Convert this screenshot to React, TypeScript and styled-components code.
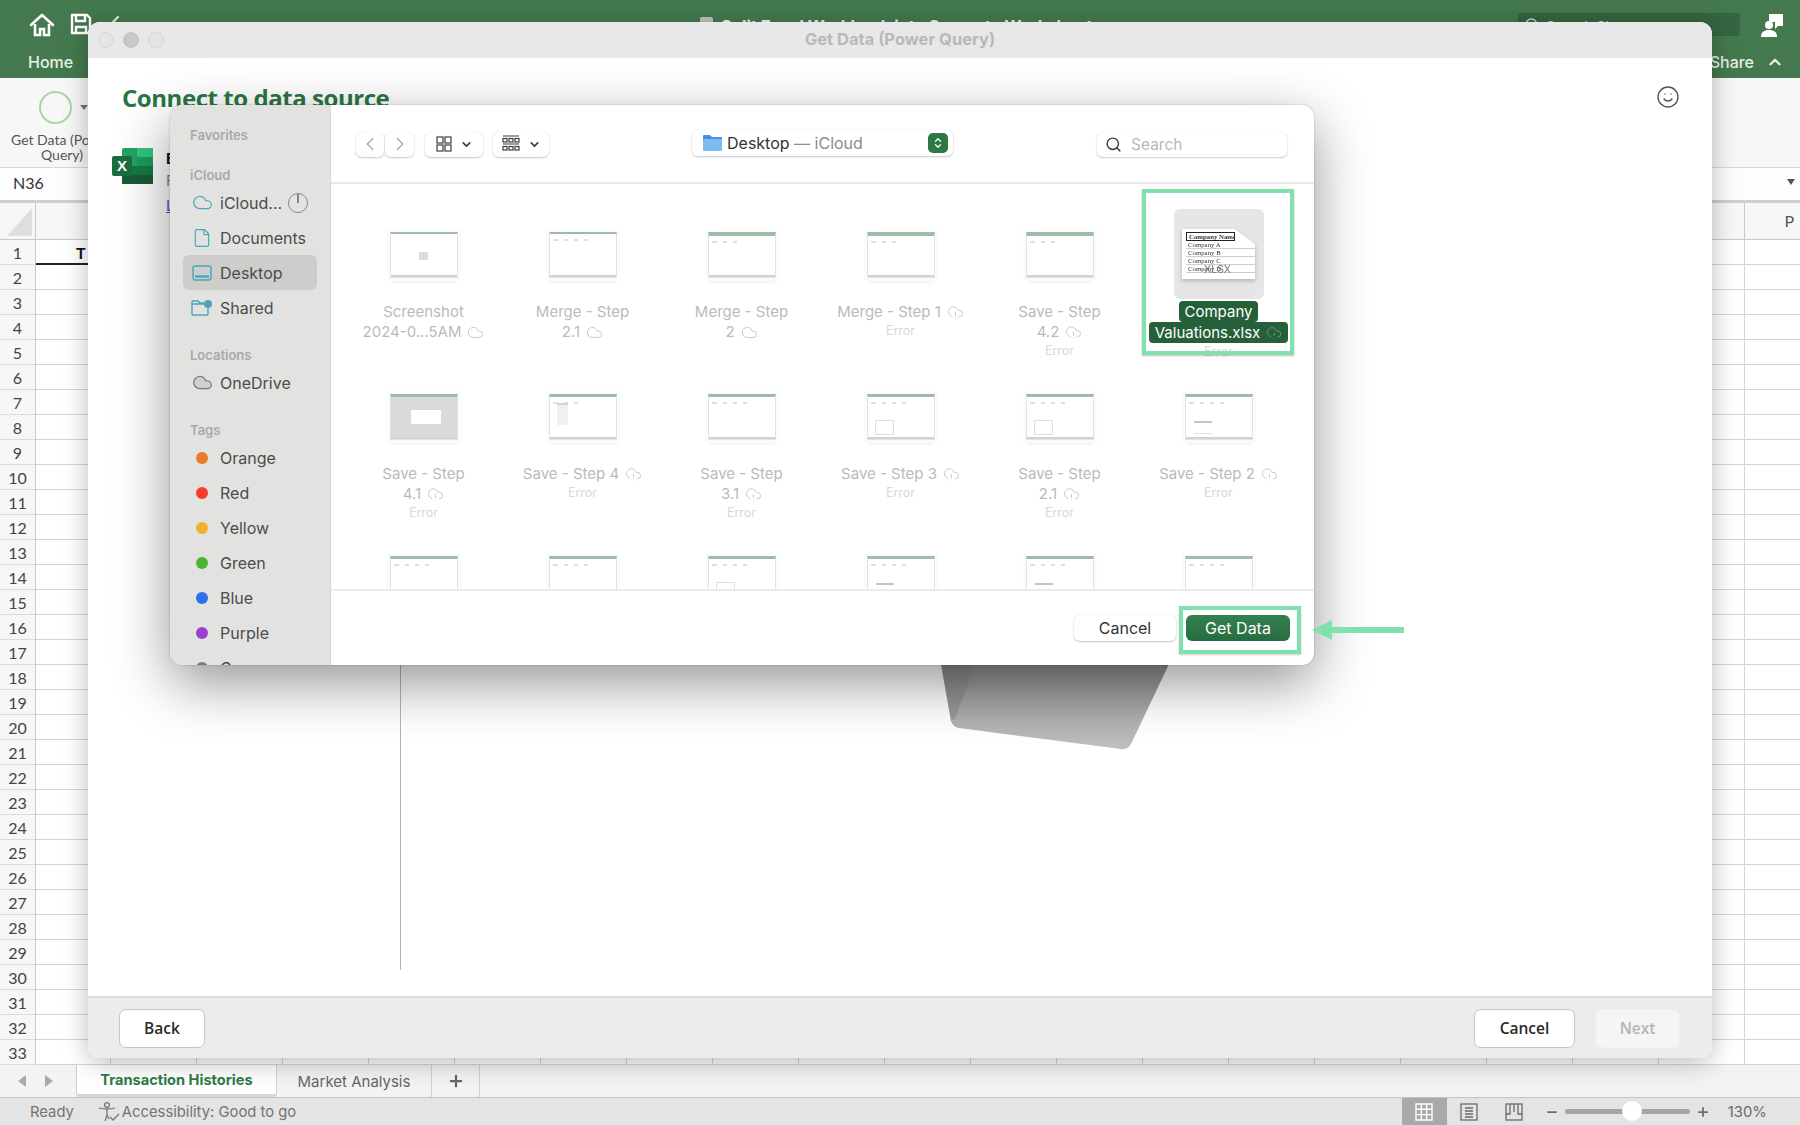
import styled, { createGlobalStyle } from "styled-components";
import {
  ChevronDown,
  ChevronLeft,
  ChevronRight,
  ChevronUp,
  Cloud,
  CloudAlert,
  File,
  Minus,
  Plus,
  Search,
  Smile,
} from "lucide-react";

const GlobalStyle = createGlobalStyle`
  html, body {
    margin: 0;
    padding: 0;
    background: #fff;
  }
  * {
    box-sizing: border-box;
  }
`;

const Screen = styled.div`
  position: relative;
  width: 1800px;
  height: 1125px;
  overflow: hidden;
  display: flex;
  flex-direction: column;
  font-family: "Inter", "Liberation Sans", sans-serif;
`;

/* Excel behind everything */
const TitleBar = styled.div`
  height: 78px;
  flex: none;
  background: #44794f;
  color: #fff;
  display: flex;
  flex-direction: column;
`;

const TitleRow = styled.div`
  height: 46px;
  display: flex;
  align-items: flex-start;
  padding: 13px 0 0 29px;
`;

const QuickIcons = styled.div`
  display: flex;
  gap: 15px;
  width: 140px;
  svg {
    display: block;
  }
`;

const DocTitle = styled.div`
  width: 1349px;
  display: flex;
  align-items: center;
  gap: 8px;
  padding: 3px 0 0 531px;
  font-size: 16.4px;
  font-weight: 700;
  line-height: 20px;
  white-space: nowrap;
  color: #eef3ef;
`;

const DocGlyph = styled.div`
  width: 13px;
  height: 18px;
  flex: none;
  background: #b9c8bc;
  border-radius: 2px;
`;

const SheetSearch = styled.div`
  width: 222px;
  height: 23px;
  display: flex;
  align-items: flex-start;
  gap: 6px;
  padding: 4px 0 0 6px;
  border-radius: 3px;
  background: #356540;
  color: #c7d6ca;
  font-size: 14px;
  line-height: 19px;
  svg {
    flex: none;
  }
`;

const Account = styled.div`
  margin-left: 20px;
  svg {
    display: block;
  }
`;

const TabRow = styled.div`
  flex: 1;
  display: flex;
  align-items: center;
  justify-content: space-between;
  padding: 0 16px 0 28px;
  font-size: 16px;
  font-weight: 500;
  color: #e6efe8;
`;

const ShareGroup = styled.div`
  display: flex;
  align-items: center;
  gap: 12px;
`;

const Ribbon = styled.div`
  height: 89px;
  flex: none;
  background: #f7f7f7;
  padding-top: 12px;
`;

const RibbonAction = styled.div`
  width: 124px;
  display: flex;
  flex-direction: column;
  align-items: center;
  font-family: "Lato", "Open Sans", sans-serif;
  font-size: 14px;
  line-height: 15px;
  color: #555;
  text-align: center;
`;

const ActionIcon = styled.div`
  display: flex;
  align-items: center;
  height: 34px;
  margin: 0 0 8px 3px;
`;

const ActionRing = styled.div`
  width: 33px;
  height: 33px;
  border-radius: 50%;
  border: 2.5px solid #a9d6a6;
`;

const Caret = styled.div`
  width: 0;
  height: 0;
  border-left: 4px solid transparent;
  border-right: 4px solid transparent;
  border-top: 5px solid #777;
  margin-left: 8px;
`;

const FormulaBar = styled.div`
  height: 36px;
  flex: none;
  display: flex;
  align-items: center;
  justify-content: space-between;
  background: #fdfdfd;
  border-top: 1px solid #d8d8d8;
  border-bottom: 3px solid #cfcfcf;
  padding: 0 5px 4px 0;
  font-family: "Lato", "Open Sans", sans-serif;
  font-size: 16px;
  color: #333;
`;

const NameBox = styled.div`
  padding-left: 13px;
`;

const FormulaCaret = styled(Caret)`
  border-top: 6px solid #555;
`;

const ColumnHeaders = styled.div`
  height: 37px;
  flex: none;
  display: flex;
  justify-content: space-between;
  background: #f7f7f7;
  border-bottom: 1px solid #c9c9c9;
  font-family: "Lato", "Open Sans", sans-serif;
  color: #555;
`;

const SelectAll = styled.div`
  width: 36px;
  padding: 5px 3px 3px 7px;
  border-right: 1px solid #c9c9c9;
`;

const Triangle = styled.div`
  width: 100%;
  height: 100%;
  background: #dedede;
  clip-path: polygon(100% 0, 100% 100%, 0 100%);
`;

const LastColumn = styled.div`
  width: 56px;
  border-left: 1px solid #c9c9c9;
  text-align: right;
  padding: 8px 6px 0 0;
  font-size: 16px;
`;

const Sheet = styled.div`
  height: 825px;
  flex: none;
  display: flex;
  background-color: #fff;
  background-image: linear-gradient(#d4d4d4 1px, transparent 1px),
    linear-gradient(90deg, #d4d4d4 1px, transparent 1px);
  background-size: 100% 25px, 86px 100%;
  background-position: 0 -1px, 24px 0;
`;

const RowHeaders = styled.div`
  width: 36px;
  flex: none;
  background: #f7f7f7;
  border-right: 1px solid #c9c9c9;
`;

const RowNumber = styled.div`
  height: 25px;
  display: flex;
  align-items: center;
  justify-content: center;
  border-bottom: 1px solid #dcdcdc;
  font-family: "Lato", "Open Sans", sans-serif;
  font-size: 16px;
  color: #444;
`;

const HeaderCell = styled.div`
  width: 122px;
  height: 25px;
  padding-left: 40px;
  border-bottom: 2px solid #222;
  background: #fff;
  font-family: "Lato", "Open Sans", sans-serif;
  font-size: 16px;
  line-height: 25px;
  font-weight: 700;
  color: #111;
`;

const TabStrip = styled.div`
  height: 32px;
  flex: none;
  display: flex;
  background: #f3f3f3;
  font-size: 15px;
  color: #666;
`;

const TabArrows = styled.div`
  width: 76px;
  display: flex;
  align-items: center;
  gap: 19px;
  padding-left: 18px;
`;

const ArrowTip = styled.div<{ $right?: boolean }>`
  width: 0;
  height: 0;
  border-top: 6px solid transparent;
  border-bottom: 6px solid transparent;
  ${(p) =>
    p.$right
      ? "border-left: 8px solid #aaa;"
      : "border-right: 8px solid #aaa;"}
`;

const SheetTab = styled.div<{ $active?: boolean; $width: number }>`
  width: ${(p) => p.$width}px;
  display: flex;
  align-items: center;
  justify-content: center;
  border-right: 1px solid #d0d0d0;
  ${(p) =>
    p.$active
      ? `
    background: #fff;
    color: #2e7b49;
    font-size: 14.6px;
    font-weight: 700;
    border-bottom: 3px solid #d6d6d6;
    border-left: 1px solid #d0d0d0;
    border-radius: 0 0 4px 4px;
  `
      : ""}
`;

const StatusBar = styled.div`
  height: 28px;
  flex: none;
  display: flex;
  align-items: stretch;
  background: #e4e4e4;
  border-top: 1px solid #c4c4c4;
  font-size: 14.8px;
  color: #737373;
`;

const StatusText = styled.div`
  display: flex;
  align-items: center;
  gap: 2px;
  padding-left: 30px;
`;

const Accessibility = styled(StatusText)`
  padding-left: 24px;
  width: 1328px;
`;

const ViewButton = styled.div<{ $active?: boolean }>`
  width: 45px;
  display: flex;
  align-items: center;
  justify-content: center;
  background: ${(p) => (p.$active ? "#a9a9a9" : "transparent")};
`;

const ZoomGroup = styled.div`
  display: flex;
  align-items: center;
  margin-left: 8px;
  color: #6a6a6a;
`;

const ZoomTrack = styled.div`
  position: relative;
  width: 125px;
  height: 5px;
  margin: 0 6px;
  border-radius: 3px;
  background: #a5a5a5;
`;

const ZoomThumb = styled.div`
  position: absolute;
  left: 57px;
  top: -8px;
  width: 20px;
  height: 20px;
  border-radius: 50%;
  background: #fff;
`;

const ZoomValue = styled.div`
  margin-left: 18px;
`;

/* Get Data window */
const Modal = styled.div`
  position: absolute;
  left: 88px;
  top: 22px;
  width: 1624px;
  height: 1036px;
  display: flex;
  flex-direction: column;
  background: #fff;
  border-radius: 12px;
  overflow: hidden;
`;

const ModalShadow = styled.div`
  position: absolute;
  left: 88px;
  top: 22px;
  width: 1624px;
  height: 1036px;
  border-radius: 12px;
  box-shadow: 0 4px 26px rgba(0, 0, 0, 0.28);
`;

const ModalTitle = styled.div`
  position: relative;
  height: 36px;
  flex: none;
  background: #e8e8e8;
  display: flex;
  align-items: center;
  justify-content: center;
  padding-bottom: 2px;
  font-size: 16.5px;
  font-weight: 700;
  color: #b8b8b8;
`;

const Lights = styled.div`
  position: absolute;
  left: 10px;
  top: 10px;
  display: flex;
  gap: 9px;
`;

const Light = styled.div<{ $dark?: boolean }>`
  width: 16px;
  height: 16px;
  border-radius: 50%;
  background: ${(p) => (p.$dark ? "#c8c8c8" : "#e4e4e4")};
  border: 1px solid ${(p) => (p.$dark ? "#c2c2c2" : "#d6d6d6")};
`;

const ModalBody = styled.div`
  flex: 1;
  display: flex;
  flex-direction: column;
  padding: 21px 0 26px 34px;
`;

const ModalHeading = styled.div`
  display: flex;
  justify-content: space-between;
  align-items: center;
  padding-right: 32px;
  height: 36px;
  margin-bottom: 25px;
  color: #555;
`;

const HeadingText = styled.div`
  font-family: "Open Sans", "Liberation Sans", sans-serif;
  font-size: 24px;
  font-weight: 700;
  letter-spacing: -0.45px;
  color: #2a7645;
`;

const Panes = styled.div`
  flex: 1;
  display: flex;
`;

const SourceList = styled.div`
  width: 289px;
  flex: none;
  border-right: 1px solid #b5b5b5;
  display: flex;
  gap: 12px;
  padding: 8px 0 0 0;
  margin-left: -10px;
  margin-right: 10px;
`;

const SourceText = styled.div`
  font-size: 15px;
  line-height: 22px;
  color: #888;
`;

const SourceName = styled.div`
  font-weight: 700;
  color: #111;
`;

const SourceLink = styled.div`
  margin-top: 3px;
  color: #2c62b4;
  text-decoration: underline;
`;

const PreviewPane = styled.div`
  flex: 1;
  padding: 524px 0 0 530px;
`;

const ModalFooter = styled.div`
  height: 62px;
  flex: none;
  display: flex;
  align-items: center;
  background: #ececec;
  border-top: 2px solid #dcdcdc;
  padding: 0 32px 0 31px;
  font-family: "Open Sans", "Liberation Sans", sans-serif;
  font-size: 15.5px;
  font-weight: 600;
`;

const FooterButton = styled.div<{ $width: number; $disabled?: boolean }>`
  width: ${(p) => p.$width}px;
  height: 39px;
  display: flex;
  align-items: center;
  justify-content: center;
  background: ${(p) => (p.$disabled ? "#f5f5f5" : "#fff")};
  border: 1px solid ${(p) => (p.$disabled ? "#f0f0f0" : "#c6c6c6")};
  border-radius: 7px;
  color: ${(p) => (p.$disabled ? "#b4b4b4" : "#2a2a2a")};
`;

const FooterSpacer = styled.div<{ $width?: number }>`
  ${(p) => (p.$width ? `width: ${p.$width}px;` : "flex: 1;")}
`;

/* macOS file picker */
const Dialog = styled.div`
  position: absolute;
  left: 170px;
  top: 105px;
  width: 1144px;
  height: 560px;
  display: flex;
  background: #fff;
  border-radius: 12px;
  box-shadow: 0 18px 55px rgba(0, 0, 0, 0.42), 0 0 2px rgba(0, 0, 0, 0.25);
`;

const Sidebar = styled.div`
  width: 161px;
  flex: none;
  overflow: hidden;
  padding-top: 20px;
  background: #e2e2e0;
  border-right: 1px solid #d6d6d4;
  border-radius: 12px 0 0 12px;
  font-size: 16px;
  color: #4c4c4c;
`;

const SidebarTitle = styled.div`
  height: 20px;
  margin: 20px 0 0 20px;
  font-size: 13px;
  font-weight: 600;
  line-height: 20px;
  color: #a9a9a9;
  &:first-child {
    margin-top: 0;
  }
`;

const SidebarRow = styled.div<{ $active?: boolean }>`
  height: 35px;
  margin: 0 13px;
  padding-left: 7px;
  display: flex;
  align-items: center;
  gap: 6px;
  border-radius: 6px;
  background: ${(p) => (p.$active ? "#cdcdcb" : "transparent")};
`;

const RowIcon = styled.div`
  width: 24px;
  flex: none;
  display: flex;
  align-items: center;
  justify-content: center;
  color: #4ba5bb;
  svg {
    display: block;
  }
`;

const TagDot = styled.div<{ $color: string }>`
  width: 12px;
  height: 12px;
  border-radius: 50%;
  background: ${(p) => p.$color};
`;

const ProgressRing = styled.div`
  position: relative;
  width: 20px;
  height: 20px;
  border-radius: 50%;
  border: 1.5px solid #888;
  &::after {
    content: "";
    position: absolute;
    left: 8px;
    top: 0;
    width: 1.5px;
    height: 9px;
    background: #888;
  }
`;

const Browser = styled.div`
  flex: 1;
  min-width: 0;
  display: flex;
  flex-direction: column;
`;

const Toolbar = styled.div`
  height: 79px;
  flex: none;
  display: flex;
  align-items: center;
  padding: 1px 0 0 25px;
  border-bottom: 2px solid #e9e9e9;
`;

const ToolButton = styled.div<{ $width: number; $left?: number; $faint?: boolean }>`
  width: ${(p) => p.$width}px;
  height: 25px;
  margin-left: ${(p) => p.$left ?? 0}px;
  display: flex;
  align-items: center;
  justify-content: center;
  gap: 8px;
  background: #fff;
  border-radius: 6px;
  color: ${(p) => (p.$faint ? "#a8a8a8" : "#3c3c3c")};
  box-shadow: 0 1px 2px rgba(0, 0, 0, 0.2), 0 0 1px rgba(0, 0, 0, 0.12);
  svg {
    display: block;
  }
`;

const PathPicker = styled.div`
  width: 261px;
  height: 26px;
  margin: -3px 0 0 143px;
  display: flex;
  align-items: center;
  padding: 0 5px 0 11px;
  background: #fff;
  border-radius: 6px;
  box-shadow: 0 1px 2px rgba(0, 0, 0, 0.22), 0 0 1px rgba(0, 0, 0, 0.12);
  font-size: 16px;
  color: #333;
  svg {
    display: block;
    flex: none;
  }
`;

const PathName = styled.div`
  margin-left: 5px;
  flex: 1;
`;

const PathDim = styled.span`
  color: #8c8c8c;
`;

const Stepper = styled.div`
  width: 20px;
  height: 20px;
  border-radius: 5px;
  background: #2c7947;
  color: #fff;
  display: flex;
  flex-direction: column;
  align-items: center;
  justify-content: center;
  svg {
    margin: -2px 0;
  }
`;

const SearchField = styled.div`
  width: 190px;
  height: 25px;
  margin-left: 144px;
  display: flex;
  align-items: center;
  gap: 9px;
  padding-left: 8px;
  background: #fff;
  border-radius: 6px;
  box-shadow: 0 1px 2px rgba(0, 0, 0, 0.2), 0 0 1px rgba(0, 0, 0, 0.1);
  font-size: 15.5px;
  color: #b9b9b9;
  svg {
    color: #3a3a3a;
    display: block;
  }
`;

const FileGrid = styled.div`
  flex: 1;
  min-height: 0;
  overflow: hidden;
  display: grid;
  grid-template-columns: repeat(6, 159px);
  grid-auto-rows: 162px;
  padding: 26px 0 0 13px;
`;

const FileCell = styled.div`
  position: relative;
  display: flex;
  flex-direction: column;
  align-items: center;
  font-size: 15px;
  line-height: 20px;
  color: #bababa;
`;

const Preview = styled.div<{ $selected?: boolean }>`
  width: 90px;
  height: 90px;
  flex: none;
  margin: ${(p) => (p.$selected ? "-1px 0 2px" : "0 0 2px")};
  display: flex;
  align-items: center;
  justify-content: center;
  border-radius: 6px;
  background: ${(p) => (p.$selected ? "#e6e6e6" : "transparent")};
`;

const Thumb = styled.div<{ $bar: number; $dark?: boolean }>`
  width: 68px;
  height: 46px;
  position: relative;
  display: flex;
  flex-direction: column;
  background: ${(p) => (p.$dark ? "#dadada" : "#fff")};
  border: 1px solid #e2e2e2;
  border-top: ${(p) => p.$bar}px solid #9dbca7;
  box-shadow: 0 0 0 3px #fbfbfb, 0 5px 3px -1px rgba(0, 0, 0, 0.08);
`;

const ThumbMarks = styled.div`
  display: flex;
  gap: 6px;
  padding: 5px 0 0 3px;
`;

const ThumbMark = styled.div<{ $w: number }>`
  width: ${(p) => p.$w}px;
  height: 2px;
  background: #dfdfdf;
`;

type BoxKind = "outline" | "green" | "small" | "menu" | "center" | "white";

const boxPlace: Record<BoxKind, string> = {
  outline: "left: 7px; top: 23px; width: 19px; height: 15px; background: #fff; border: 1px solid #dedede;",
  green: "left: 8px; top: 24px; width: 18px; height: 13px; background: #fff; border-top: 2px solid #b6cdbc; border-bottom: 1px solid #e0e0e0;",
  small: "left: 9px; top: 32px; width: 9px; height: 5px; background: #e6e6e6;",
  menu: "left: 7px; top: 6px; width: 11px; height: 22px; background: #f0f0f0; border-top: 2px solid #c9d4ee;",
  center: "left: 28px; top: 18px; width: 9px; height: 8px; background: #dcdcdc;",
  white: "left: 20px; top: 13px; width: 30px; height: 14px; background: #fff;",
};

const ThumbBox = styled.div<{ $kind: BoxKind }>`
  position: absolute;
  ${(p) => boxPlace[p.$kind]}
`;

const ThumbFoot = styled.div`
  position: absolute;
  left: 0;
  right: 0;
  bottom: 0;
  height: 2px;
  background: #ccd5ce;
`;

const FileName = styled.div`
  display: flex;
  align-items: center;
  gap: 6px;
  height: 20px;
  white-space: nowrap;
  svg {
    color: #c4c4c4;
    display: block;
    flex: none;
  }
`;

const ErrorNote = styled.div`
  font-size: 12.5px;
  line-height: 18px;
  color: #d8d8d8;
`;

const SelectedName = styled.div`
  display: flex;
  align-items: center;
  gap: 6px;
  height: 21px;
  padding: 0 6px;
  background: #25603a;
  border-radius: 4px;
  color: #fff;
  white-space: nowrap;
  svg {
    color: #6f9a7d;
    display: block;
  }
`;

const SelectionFrame = styled.div`
  position: absolute;
  left: 3px;
  top: -21px;
  width: 152px;
  height: 166px;
  border: 4px solid #80e0ae;
  box-shadow: 0 1px 2px rgba(0, 0, 0, 0.25);
`;

const DocShadow = styled.div`
  filter: drop-shadow(0 2px 2px rgba(0, 0, 0, 0.22));
`;

const DocPage = styled.div`
  position: relative;
  width: 73px;
  height: 50px;
  background: #fff;
  clip-path: polygon(0 0, 72% 0, 100% 30%, 100% 100%, 0 100%);
  padding: 3px 0 0 4px;
  font-family: "Liberation Serif", serif;
  font-size: 6.8px;
  line-height: 7px;
  color: #333;
`;

const DocRow = styled.div<{ $head?: boolean }>`
  width: ${(p) => (p.$head ? 49 : 69)}px;
  height: ${(p) => (p.$head ? 9 : 8)}px;
  border: ${(p) => (p.$head ? "1px solid #222" : "0")};
  border-bottom: 1px solid ${(p) => (p.$head ? "#222" : "#ccc")};
  font-weight: ${(p) => (p.$head ? 700 : 400)};
  padding-left: 2px;
  white-space: nowrap;
  overflow: hidden;
`;

const DocBadge = styled.div`
  position: absolute;
  right: 24px;
  bottom: 4px;
  font-family: "Inter", sans-serif;
  font-size: 10.5px;
  line-height: 11px;
  color: #777;
`;

const DialogFooter = styled.div`
  height: 76px;
  flex: none;
  display: flex;
  align-items: center;
  justify-content: flex-end;
  gap: 10px;
  padding: 0 24px 0 0;
  border-top: 2px solid #ececec;
  font-size: 16px;
`;

const CancelButton = styled.div`
  width: 102px;
  height: 26px;
  display: flex;
  align-items: center;
  justify-content: center;
  border-radius: 6px;
  background: #fff;
  color: #333;
  box-shadow: 0 1px 2px rgba(0, 0, 0, 0.22), 0 0 1px rgba(0, 0, 0, 0.14);
`;

const PrimaryButton = styled.div`
  position: relative;
  width: 104px;
  height: 26px;
  display: flex;
  align-items: center;
  justify-content: center;
  border-radius: 6px;
  background: linear-gradient(#347f4f, #276d40);
  color: #fff;
  &::after {
    content: "";
    position: absolute;
    inset: -9px -11px -13px -7px;
    border: 4px solid #80e0ae;
    box-shadow: 0 1px 2px rgba(0, 0, 0, 0.2);
  }
`;

const Pointer = styled.svg`
  position: absolute;
  left: 126px;
  top: 4px;
`;

const sources = [
  { title: "Documents", icon: "doc" },
  { title: "Desktop", icon: "desktop", active: true },
  { title: "Shared", icon: "shared" },
];

const tags = [
  ["Orange", "#ec7a2b"],
  ["Red", "#fb3a2e"],
  ["Yellow", "#edb230"],
  ["Green", "#4bb636"],
  ["Blue", "#2b70ee"],
  ["Purple", "#9a3fcf"],
  ["Gray", "#7a7a7a"],
];

type FileItem = {
  lines: string[];
  cloud?: boolean;
  alert?: boolean;
  error?: boolean;
  bar: number;
  marks?: number;
  dark?: boolean;
  box?: BoxKind;
};

const files: FileItem[] = [
  { lines: ["Screenshot", "2024-0...5AM"], cloud: true, bar: 2, box: "center" },
  { lines: ["Merge - Step", "2.1"], cloud: true, bar: 2, marks: 4 },
  { lines: ["Merge - Step", "2"], cloud: true, bar: 4, marks: 3 },
  { lines: ["Merge - Step 1"], alert: true, error: true, bar: 4, marks: 3 },
  { lines: ["Save - Step", "4.2"], alert: true, error: true, bar: 4, marks: 3 },
];

const secondRow: FileItem[] = [
  { lines: ["Save - Step", "4.1"], alert: true, error: true, bar: 3, dark: true, box: "white" },
  { lines: ["Save - Step 4"], alert: true, error: true, bar: 3, marks: 3, box: "menu" },
  { lines: ["Save - Step", "3.1"], alert: true, error: true, bar: 3, marks: 4 },
  { lines: ["Save - Step 3"], alert: true, error: true, bar: 3, marks: 4, box: "outline" },
  { lines: ["Save - Step", "2.1"], alert: true, error: true, bar: 3, marks: 4, box: "outline" },
  { lines: ["Save - Step 2"], alert: true, error: true, bar: 3, marks: 4, box: "green" },
];

const thirdRowBoxes: (BoxKind | undefined)[] = ["small", undefined, "outline", "green", "green", "small"];

const thirdRow: FileItem[] = thirdRowBoxes.map((box) => ({
  lines: [],
  bar: 3,
  marks: 4,
  box,
}));

const HomeIcon = () => (
  <svg width="26" height="24" viewBox="0 0 26 24" fill="none" stroke="#fff" strokeWidth="2.6">
    <path d="M2 12 13 2l11 10" strokeLinecap="round" strokeLinejoin="round" />
    <path d="M6 11v11h5v-6h4v6h5V11" fill="none" />
  </svg>
);

const SaveIcon = () => (
  <svg width="22" height="22" viewBox="0 0 22 22" fill="none" stroke="#fff" strokeWidth="2.4">
    <path d="M2 2h15l3 3v15H2z" strokeLinejoin="round" />
    <path d="M6 2v6h9V2M6 20v-6h10v6" />
  </svg>
);

const UndoIcon = () => (
  <svg width="22" height="22" viewBox="0 0 22 22" fill="none" stroke="#e3ebe4" strokeWidth="2.2">
    <path d="M4 11 11 4M4 11c5-2 12-1 14 8" strokeLinecap="round" />
  </svg>
);

const AccountIcon = () => (
  <svg width="24" height="26" viewBox="0 0 24 26" fill="#fff">
    <circle cx="9" cy="12" r="4" />
    <path d="M1 24c0-5 3-7 8-7s8 2 8 7z" />
    <path d="M9 1h14v12h-5l-3 3V9H9z" />
  </svg>
);

const ExcelLogo = () => (
  <svg width="42" height="36" viewBox="0 0 42 36">
    <rect x="10" y="0" width="31" height="36" rx="2" fill="#21a366" />
    <rect x="25" y="0" width="16" height="9" fill="#33c481" />
    <rect x="10" y="9" width="15" height="9" fill="#21a366" />
    <rect x="25" y="9" width="16" height="9" fill="#1d9a5c" />
    <rect x="10" y="18" width="31" height="9" fill="#107c41" />
    <rect x="10" y="27" width="31" height="9" fill="#185c37" />
    <rect x="0" y="8" width="20" height="20" rx="2" fill="#1c6d3f" />
    <text x="10" y="23" textAnchor="middle" fontFamily="Liberation Sans" fontWeight="700" fontSize="15" fill="#fff">
      X
    </text>
  </svg>
);

const DesktopIcon = () => (
  <svg width="20" height="16" viewBox="0 0 20 16" fill="none" stroke="#4ba5bb" strokeWidth="1.4">
    <rect x="1" y="1" width="18" height="14" rx="2" />
    <path d="M3 11.5h14" strokeWidth="2.4" />
  </svg>
);

const SharedIcon = () => (
  <svg width="22" height="18" viewBox="0 0 22 18" fill="none" stroke="#4ba5bb" strokeWidth="1.4">
    <path d="M1 5V3a1 1 0 0 1 1-1h5l2 2h4M1 5h14M1 5v10a1 1 0 0 0 1 1h14a1 1 0 0 0 1-1V9" />
    <circle cx="17" cy="5" r="4" fill="#4ba5bb" stroke="none" />
  </svg>
);

const GroupIcon = () => (
  <svg width="18" height="18" viewBox="0 0 18 18" fill="none" stroke="#3c3c3c" strokeWidth="1.2">
    <path d="M1 1h16M1 9h16" />
    <rect x="1" y="3.5" width="4" height="3.5" />
    <rect x="7" y="3.5" width="4" height="3.5" />
    <rect x="13" y="3.5" width="4" height="3.5" />
    <rect x="1" y="11.5" width="4" height="3.5" />
    <rect x="7" y="11.5" width="4" height="3.5" />
    <rect x="13" y="11.5" width="4" height="3.5" />
  </svg>
);

const TilesIcon = () => (
  <svg width="16" height="16" viewBox="0 0 16 16" fill="none" stroke="#3c3c3c" strokeWidth="1.2">
    <rect x="1" y="1" width="6" height="6" />
    <rect x="9" y="1" width="6" height="6" />
    <rect x="1" y="9" width="6" height="6" />
    <rect x="9" y="9" width="6" height="6" />
  </svg>
);

const FolderIcon = () => (
  <svg width="19" height="19" viewBox="0 0 19 19">
    <path d="M0 3a1 1 0 0 1 1-1h6l2 2h9a1 1 0 0 1 1 1v2H0z" fill="#4a90dc" />
    <rect x="0" y="6" width="19" height="12" rx="1" fill="#7dbcee" />
  </svg>
);

const AccessIcon = () => (
  <svg width="22" height="22" viewBox="0 0 22 22" fill="none" stroke="#777" strokeWidth="1.3">
    <circle cx="9" cy="4" r="2.4" />
    <path d="M1 7c3 1 5 1 8 1s5 0 8-1M9 8v6l-2 6M9 14l2 4" />
    <path d="m12 16 3 3 6-6" />
  </svg>
);

const NormalViewIcon = () => (
  <svg width="18" height="18" viewBox="0 0 18 18" fill="none" stroke="#fff" strokeWidth="1.4">
    <path d="M1 1h16v16H1zM1 6.3h16M1 11.6h16M6.3 1v16M11.6 1v16" />
  </svg>
);

const PageViewIcon = () => (
  <svg width="18" height="18" viewBox="0 0 18 18" fill="none" stroke="#6a6a6a" strokeWidth="1.3">
    <rect x="1" y="1" width="16" height="16" />
    <path d="M5 5h8M5 8h8M5 11h8M5 14h8" />
  </svg>
);

const BreakViewIcon = () => (
  <svg width="18" height="18" viewBox="0 0 18 18" fill="none" stroke="#6a6a6a" strokeWidth="1.3">
    <rect x="1" y="1" width="16" height="16" />
    <path d="M9 1v8M1 11h4V1M13 1v10h4" />
  </svg>
);

const FileTile = ({ file }: { file: FileItem }) => (
  <FileCell>
    <Preview>
      <Thumb $bar={file.bar} $dark={file.dark}>
        {file.marks ? (
          <ThumbMarks>
            {Array.from({ length: file.marks }).map((_, i) => (
              <ThumbMark key={i} $w={i === 0 ? 5 : 4} />
            ))}
          </ThumbMarks>
        ) : null}
        {file.box ? <ThumbBox $kind={file.box} /> : null}
        <ThumbFoot />
      </Thumb>
    </Preview>
    {file.lines.map((line, i) => (
      <FileName key={line}>
        {line}
        {i === file.lines.length - 1 && file.cloud ? <Cloud size={17} strokeWidth={1.3} /> : null}
        {i === file.lines.length - 1 && file.alert ? <CloudAlert size={17} strokeWidth={1.3} /> : null}
      </FileName>
    ))}
    {file.error ? <ErrorNote>Error</ErrorNote> : null}
  </FileCell>
);

const App = () => {
  return (
    <Screen>
      <GlobalStyle />
      <TitleBar>
        <TitleRow>
          <QuickIcons>
            <HomeIcon />
            <SaveIcon />
            <UndoIcon />
          </QuickIcons>
          <DocTitle>
            <DocGlyph />
            Split Excel Workbook into Separate Worksheets
          </DocTitle>
          <SheetSearch>
            <Search size={16} strokeWidth={2} />
            Search Sheet
          </SheetSearch>
          <Account>
            <AccountIcon />
          </Account>
        </TitleRow>
        <TabRow>
          <div>Home</div>
          <ShareGroup>
            Share
            <ChevronUp size={18} strokeWidth={3} />
          </ShareGroup>
        </TabRow>
      </TitleBar>

      <Ribbon>
        <RibbonAction>
          <ActionIcon>
            <ActionRing />
            <Caret />
          </ActionIcon>
          Get Data (Power Query)
        </RibbonAction>
      </Ribbon>

      <FormulaBar>
        <NameBox>N36</NameBox>
        <FormulaCaret />
      </FormulaBar>

      <ColumnHeaders>
        <SelectAll>
          <Triangle />
        </SelectAll>
        <LastColumn>P</LastColumn>
      </ColumnHeaders>

      <Sheet>
        <RowHeaders>
          {Array.from({ length: 33 }).map((_, i) => (
            <RowNumber key={i}>{i + 1}</RowNumber>
          ))}
        </RowHeaders>
        <HeaderCell>T</HeaderCell>
      </Sheet>

      <TabStrip>
        <TabArrows>
          <ArrowTip />
          <ArrowTip $right />
        </TabArrows>
        <SheetTab $active $width={201}>
          Transaction Histories
        </SheetTab>
        <SheetTab $width={155}>Market Analysis</SheetTab>
        <SheetTab $width={48}>
          <Plus size={18} strokeWidth={3} />
        </SheetTab>
      </TabStrip>

      <StatusBar>
        <StatusText>Ready</StatusText>
        <Accessibility>
          <AccessIcon />
          Accessibility: Good to go
        </Accessibility>
        <ViewButton $active>
          <NormalViewIcon />
        </ViewButton>
        <ViewButton>
          <PageViewIcon />
        </ViewButton>
        <ViewButton>
          <BreakViewIcon />
        </ViewButton>
        <ZoomGroup>
          <Minus size={14} strokeWidth={3} />
          <ZoomTrack>
            <ZoomThumb />
          </ZoomTrack>
          <Plus size={14} strokeWidth={3} />
          <ZoomValue>130%</ZoomValue>
        </ZoomGroup>
      </StatusBar>

      <ModalShadow />
      <Modal>
        <ModalTitle>
          <Lights>
            <Light />
            <Light $dark />
            <Light />
          </Lights>
          Get Data (Power Query)
        </ModalTitle>
        <ModalBody>
          <ModalHeading>
            <HeadingText>Connect to data source</HeadingText>
            <Smile size={24} strokeWidth={1.4} />
          </ModalHeading>
          <Panes>
            <SourceList>
              <ExcelLogo />
              <SourceText>
                <SourceName>Excel workbook</SourceName>
                File
                <SourceLink>Learn more</SourceLink>
              </SourceText>
            </SourceList>
            <PreviewPane>
              <svg width="230" height="88" viewBox="0 0 230 88">
                <defs>
                  <linearGradient id="shade" x1="0" y1="0" x2="0" y2="1">
                    <stop offset="0" stopColor="#8f8f8f" />
                    <stop offset="1" stopColor="#c0c0c0" />
                  </linearGradient>
                </defs>
                <path d="M0 0h228l-38 80q-3 6-10 5L18 64q-6-1-8-7z" fill="url(#shade)" />
                <path d="M0 0h35L14 54l-4 3z" fill="#8a8a8a" opacity="0.6" />
              </svg>
            </PreviewPane>
          </Panes>
        </ModalBody>
        <ModalFooter>
          <FooterButton $width={86}>Back</FooterButton>
          <FooterSpacer />
          <FooterButton $width={101}>Cancel</FooterButton>
          <FooterSpacer $width={20} />
          <FooterButton $width={85} $disabled>
            Next
          </FooterButton>
        </ModalFooter>
      </Modal>

      <Dialog>
        <Sidebar>
          <SidebarTitle>Favorites</SidebarTitle>
          <SidebarTitle>iCloud</SidebarTitle>
          <SidebarRow>
            <RowIcon>
              <Cloud size={21} strokeWidth={1.4} />
            </RowIcon>
            iCloud...
            <ProgressRing />
          </SidebarRow>
          {sources.map((s) => (
            <SidebarRow key={s.title} $active={s.active}>
              <RowIcon>
                {s.icon === "doc" && <File size={20} strokeWidth={1.4} />}
                {s.icon === "desktop" && <DesktopIcon />}
                {s.icon === "shared" && <SharedIcon />}
              </RowIcon>
              {s.title}
            </SidebarRow>
          ))}
          <SidebarTitle>Locations</SidebarTitle>
          <SidebarRow>
            <RowIcon>
              <Cloud size={21} strokeWidth={1.4} color="#777" fill="#cfcfcf" />
            </RowIcon>
            OneDrive
          </SidebarRow>
          <SidebarTitle>Tags</SidebarTitle>
          {tags.map(([name, color]) => (
            <SidebarRow key={name}>
              <RowIcon>
                <TagDot $color={color} />
              </RowIcon>
              {name}
            </SidebarRow>
          ))}
        </Sidebar>

        <Browser>
          <Toolbar>
            <ToolButton $width={28} $faint>
              <ChevronLeft size={22} strokeWidth={1.4} />
            </ToolButton>
            <ToolButton $width={29} $left={1} $faint>
              <ChevronRight size={22} strokeWidth={1.4} />
            </ToolButton>
            <ToolButton $width={58} $left={11}>
              <TilesIcon />
              <ChevronDown size={13} strokeWidth={3} />
            </ToolButton>
            <ToolButton $width={56} $left={10}>
              <GroupIcon />
              <ChevronDown size={13} strokeWidth={3} />
            </ToolButton>
            <PathPicker>
              <FolderIcon />
              <PathName>
                Desktop <PathDim>— iCloud</PathDim>
              </PathName>
              <Stepper>
                <ChevronUp size={10} strokeWidth={3} />
                <ChevronDown size={10} strokeWidth={3} />
              </Stepper>
            </PathPicker>
            <SearchField>
              <Search size={17} strokeWidth={2} />
              Search
            </SearchField>
          </Toolbar>

          <FileGrid>
            {files.map((f) => (
              <FileTile key={f.lines.join()} file={f} />
            ))}
            <FileCell>
              <Preview $selected>
                <DocShadow>
                  <DocPage>
                    <DocRow $head>Company Name</DocRow>
                    <DocRow>Company A</DocRow>
                    <DocRow>Company B</DocRow>
                    <DocRow>Company C</DocRow>
                    <DocRow>Company D</DocRow>
                    <DocBadge>XLSX</DocBadge>
                  </DocPage>
                </DocShadow>
              </Preview>
              <SelectedName>Company</SelectedName>
              <SelectedName>
                Valuations.xlsx
                <CloudAlert size={16} strokeWidth={1.3} />
              </SelectedName>
              <ErrorNote>Error</ErrorNote>
              <SelectionFrame />
            </FileCell>
            {secondRow.map((f) => (
              <FileTile key={f.lines.join()} file={f} />
            ))}
            {thirdRow.map((f, i) => (
              <FileTile key={i} file={f} />
            ))}
          </FileGrid>

          <DialogFooter>
            <CancelButton>Cancel</CancelButton>
            <PrimaryButton>
              Get Data
              <Pointer width="92" height="22" viewBox="0 0 92 22">
                <path d="M0 11 20 1v7h72v6H20v7z" fill="#80e0ae" />
              </Pointer>
            </PrimaryButton>
          </DialogFooter>
        </Browser>
      </Dialog>
    </Screen>
  );
};

export default App;
